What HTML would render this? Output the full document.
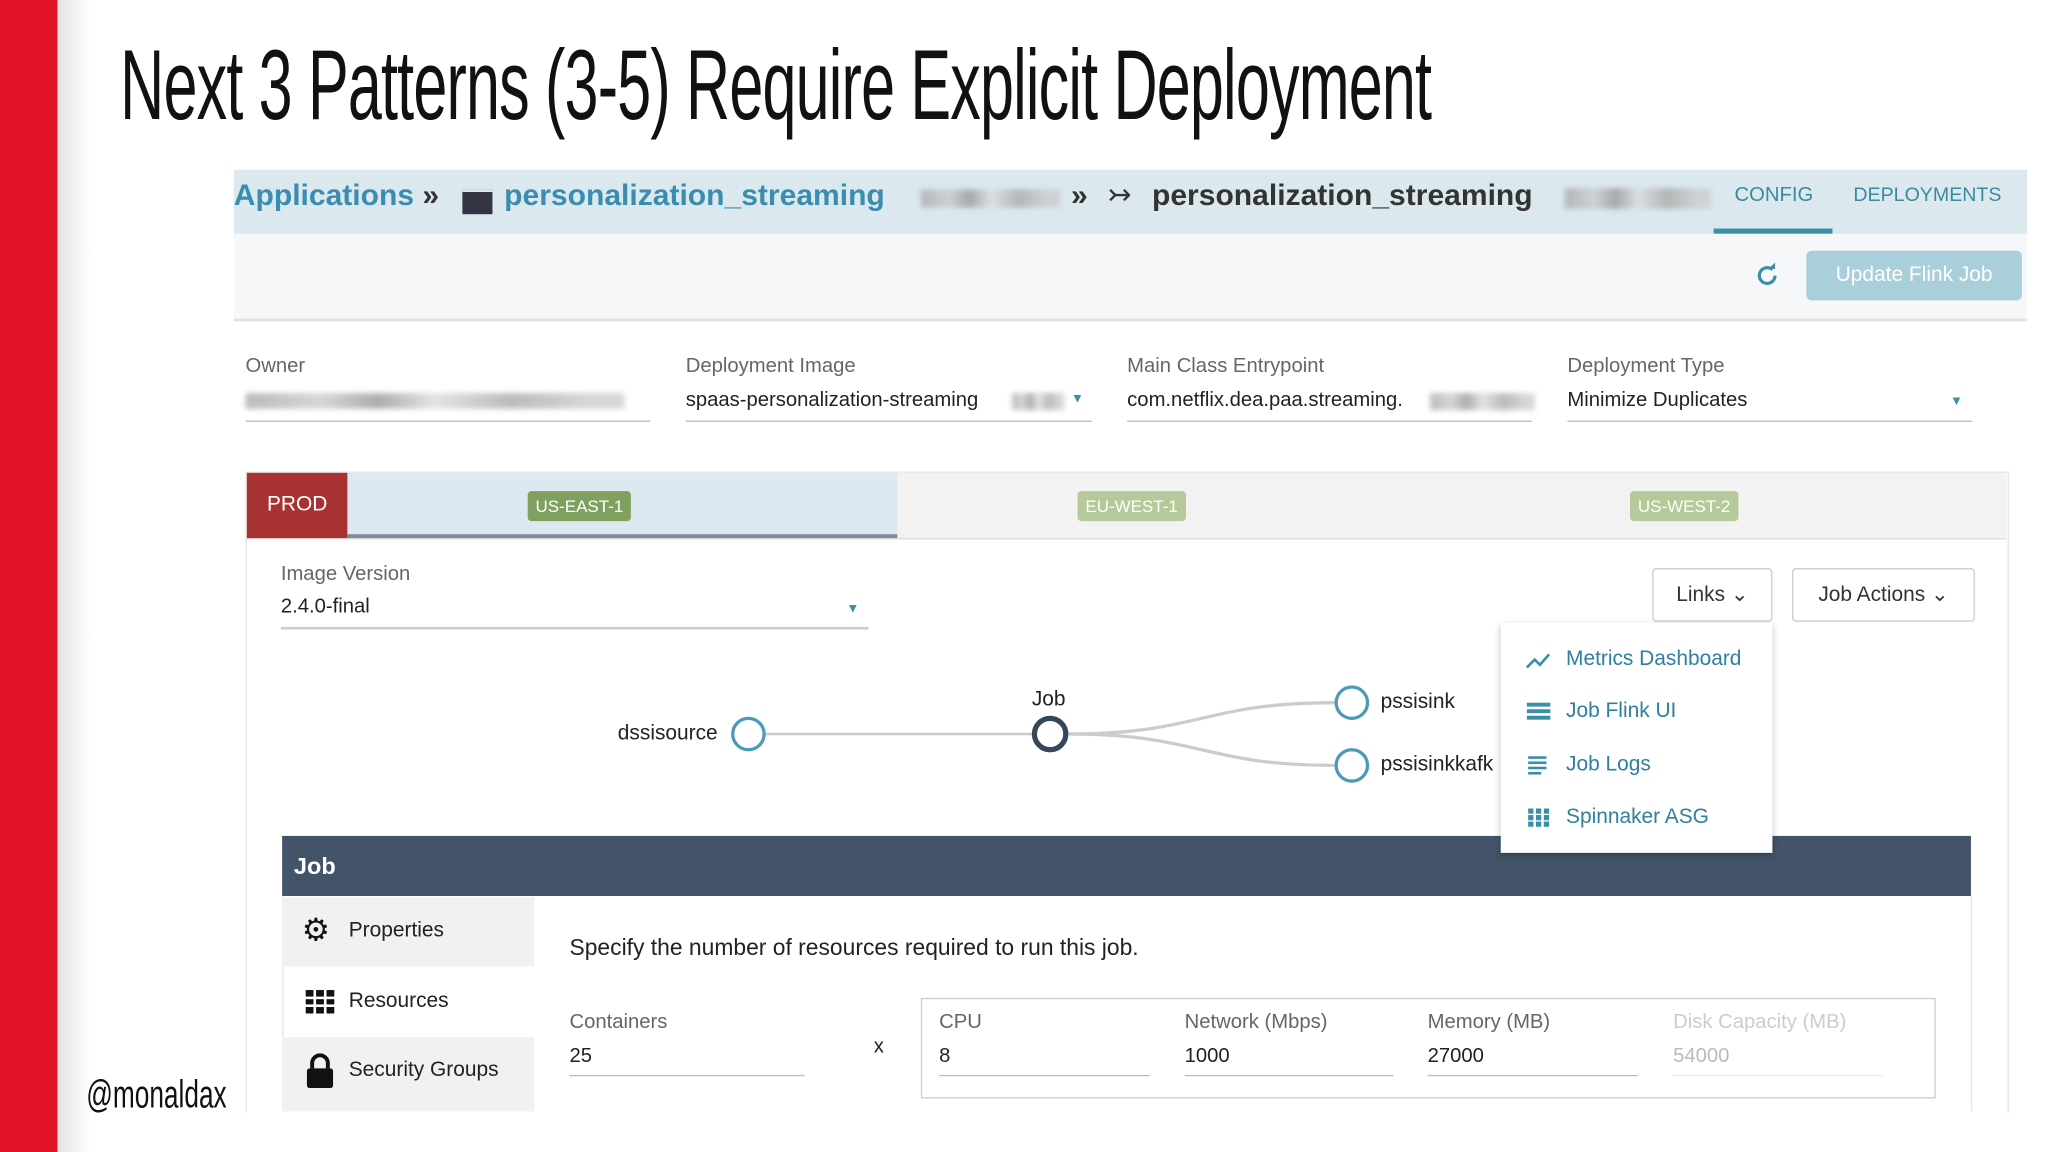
<!DOCTYPE html>
<html><head><meta charset="utf-8"><style>
html,body{margin:0;padding:0;width:2048px;height:1152px;overflow:hidden;background:#fff}
#w{position:absolute;left:0;top:0;width:1568px;height:882px;transform:scale(1.306122);transform-origin:0 0;font-family:"Liberation Sans",sans-serif;color:#333}
.a{position:absolute}
.lbl{font-size:15.5px;color:#666}
.val{font-size:15.5px;color:#222}
.ul{height:1px;background:#bbb}
.blur{background:linear-gradient(90deg,#aaa,#ccc 20%,#999 35%,#ddd 50%,#aaa 70%,#ccc 90%);filter:blur(2px);opacity:.8}
.badge{font-size:13px;color:#fff;padding:4px 6px;border-radius:3px}
.mi{font-size:15.5px;color:#2f7f9e}
.bc{font-size:23px;font-weight:bold;white-space:nowrap}
</style></head><body><div id="w">
<div class="a" style="left:0;top:0;width:44px;height:882px;background:#e21127"></div>
<div class="a" style="left:44px;top:0;width:26px;height:882px;background:linear-gradient(90deg,#e4e4e4,#fff)"></div>
<div class="a" style="left:92px;top:22px;font-family:'Liberation Sans Narrow','Liberation Sans',sans-serif;font-size:76px;color:#111;white-space:nowrap;transform:scaleX(0.615);transform-origin:0 0;letter-spacing:-1px">Next 3 Patterns (3-5) Require Explicit Deployment</div>
<div class="a" style="left:66px;top:822px;font-family:'Liberation Sans Narrow',sans-serif;font-size:30px;color:#111;transform:scaleX(0.67);transform-origin:0 0">@monaldax</div>

<div class="a" style="left:179px;top:130px;width:1373px;height:49px;background:#dbe9ef"></div>
<div class="a bc" style="left:179px;top:136px;color:#3b8db0">Applications <span style="color:#333">»</span></div>
<div class="a" style="left:354px;top:145px;width:23px;height:17px;background:#334;border-top:2px solid #dbe9ef;box-shadow:0 -3px 0 #334 inset"></div>
<div class="a bc" style="left:386px;top:136px;color:#3b8db0">personalization_streaming</div>
<div class="a blur" style="left:705px;top:145px;width:107px;height:14px"></div>
<div class="a bc" style="left:820px;top:136px;color:#333">»</div>
<div class="a" style="left:848px;top:136px;font-size:22px;color:#333">↣</div>
<div class="a bc" style="left:882px;top:136px;color:#333">personalization_streaming</div>
<div class="a blur" style="left:1198px;top:144px;width:112px;height:16px"></div>
<div class="a" style="left:1328px;top:141px;font-size:15.5px;color:#3a8a9f">CONFIG</div>
<div class="a" style="left:1419px;top:141px;font-size:15px;color:#3a8a9f">DEPLOYMENTS</div>
<div class="a" style="left:1312px;top:175px;width:91px;height:4px;background:#3a8fa8"></div>

<div class="a" style="left:179px;top:179px;width:1373px;height:65px;background:#f6f7f9;border-bottom:2px solid #e2e2e2"></div>
<svg class="a" style="left:1343px;top:201px" width="20" height="20" viewBox="0 0 20 20"><path d="M16 10a6 6 0 1 1-2-4.5" fill="none" stroke="#3a8fa8" stroke-width="2.4"/><path d="M11 5h5V0z" fill="#3a8fa8"/></svg>
<div class="a" style="left:1383px;top:192px;width:165px;height:38px;background:#a9d0da;border-radius:4px;color:#fff;font-size:16px;line-height:38px;text-align:center">Update Flink Job</div>

<div class="a lbl" style="left:188px;top:272px">Owner</div>
<div class="a blur" style="left:188px;top:301px;width:290px;height:12px"></div>
<div class="a ul" style="left:188px;top:322px;width:310px"></div>
<div class="a lbl" style="left:525px;top:272px">Deployment Image</div>
<div class="a val" style="left:525px;top:298px">spaas-personalization-streaming</div>
<div class="a blur" style="left:775px;top:301px;width:40px;height:13px"></div>
<div class="a" style="left:820px;top:300px;font-size:10px;color:#3a8fa8">▼</div>
<div class="a ul" style="left:525px;top:322px;width:311px"></div>
<div class="a lbl" style="left:863px;top:272px">Main Class Entrypoint</div>
<div class="a val" style="left:863px;top:298px">com.netflix.dea.paa.streaming.</div>
<div class="a blur" style="left:1095px;top:301px;width:80px;height:13px"></div>
<div class="a ul" style="left:863px;top:322px;width:310px"></div>
<div class="a lbl" style="left:1200px;top:272px">Deployment Type</div>
<div class="a val" style="left:1200px;top:298px">Minimize Duplicates</div>
<div class="a" style="left:1493px;top:302px;font-size:10px;color:#3a8fa8">▼</div>
<div class="a ul" style="left:1200px;top:322px;width:310px"></div>

<div class="a" style="left:188px;top:361px;width:1348px;height:490px;border:1px solid #e4e4e4;border-bottom:none"></div>
<div class="a" style="left:189px;top:362px;width:1347px;height:50px;background:#f2f2f2;border-bottom:1px solid #ddd"></div>
<div class="a" style="left:189px;top:362px;width:77px;height:50px;background:#a83232;color:#fff;font-size:16px;line-height:50px;text-align:center">PROD</div>
<div class="a" style="left:266px;top:362px;width:421px;height:47px;background:#dde9f0;border-bottom:3px solid #7f8c99"></div>
<div class="a badge" style="left:404px;top:376px;background:#80a060">US-EAST-1</div>
<div class="a badge" style="left:825px;top:376px;background:#b5c99a">EU-WEST-1</div>
<div class="a badge" style="left:1248px;top:376px;background:#b5c99a">US-WEST-2</div>

<div class="a lbl" style="left:215px;top:431px">Image Version</div>
<div class="a val" style="left:215px;top:456px">2.4.0-final</div>
<div class="a" style="left:648px;top:461px;font-size:10px;color:#3a8fa8">▼</div>
<div class="a" style="left:215px;top:480px;width:450px;height:2px;background:#ccc"></div>
<div class="a" style="left:1265px;top:435px;width:90px;height:39px;border:1px solid #ccc;border-radius:3px;font-size:16px;line-height:39px;text-align:center">Links ⌄</div>
<div class="a" style="left:1372px;top:435px;width:138px;height:39px;border:1px solid #ccc;border-radius:3px;font-size:16px;line-height:39px;text-align:center">Job Actions ⌄</div>

<svg class="a" style="left:0;top:0" width="1568" height="882">
<line x1="586" y1="562" x2="792" y2="562" stroke="#ccc" stroke-width="2"/>
<path d="M817 562C920 562 920 538 1022 538M817 562C920 562 920 586 1022 586" fill="none" stroke="#ccc" stroke-width="2.5"/>
<circle cx="573" cy="562" r="12" fill="#fff" stroke="#4a9ab8" stroke-width="2.5"/>
<circle cx="804" cy="562" r="12" fill="#fff" stroke="#36475a" stroke-width="4"/>
<circle cx="1035" cy="538" r="12" fill="#fff" stroke="#4a9ab8" stroke-width="2.5"/>
<circle cx="1035" cy="586" r="12" fill="#fff" stroke="#4a9ab8" stroke-width="2.5"/>
</svg>
<div class="a val" style="left:473px;top:553px;font-size:16px">dssisource</div>
<div class="a val" style="left:790px;top:527px;font-size:16px">Job</div>
<div class="a val" style="left:1057px;top:529px;font-size:16px">pssisink</div>
<div class="a val" style="left:1057px;top:577px;font-size:16px">pssisinkkafk</div>

<div class="a" style="left:216px;top:640px;width:1293px;height:46px;background:#43546a;color:#fff;font-size:18px;font-weight:bold;line-height:46px;text-indent:9px">Job</div>
<div class="a" style="left:1149px;top:477px;width:208px;height:176px;background:#fff;box-shadow:0 2px 5px rgba(0,0,0,.25)"></div>
<svg class="a" style="left:1168px;top:496px" width="20" height="140">
<path d="M1 15l6-6 4 4 7-8" fill="none" stroke="#3a8fa8" stroke-width="2"/>
<g fill="#3a8fa8"><rect x="1" y="42" width="18" height="3"/><rect x="1" y="47" width="18" height="3"/><rect x="1" y="52" width="18" height="3"/>
<rect x="2" y="83" width="14" height="2"/><rect x="2" y="87" width="14" height="2"/><rect x="2" y="91" width="14" height="2"/><rect x="2" y="95" width="10" height="2"/>
<rect x="2" y="123" width="4" height="4"/><rect x="8" y="123" width="4" height="4"/><rect x="14" y="123" width="4" height="4"/><rect x="2" y="128" width="4" height="4"/><rect x="8" y="128" width="4" height="4"/><rect x="14" y="128" width="4" height="4"/><rect x="2" y="133" width="4" height="4"/><rect x="8" y="133" width="4" height="4"/><rect x="14" y="133" width="4" height="4"/></g></svg>
<div class="a mi" style="left:1199px;top:496px;font-size:16px">Metrics Dashboard</div>
<div class="a mi" style="left:1199px;top:536px;font-size:16px">Job Flink UI</div>
<div class="a mi" style="left:1199px;top:577px;font-size:16px">Job Logs</div>
<div class="a mi" style="left:1199px;top:617px;font-size:16px">Spinnaker ASG</div>

<div class="a" style="left:216px;top:686px;width:1292px;height:165px;border-left:1px solid #e4e4e4;border-right:1px solid #e4e4e4"></div>
<div class="a" style="left:216px;top:687px;width:193px;height:53px;background:#f1f1f1"></div>
<div class="a" style="left:216px;top:794px;width:193px;height:57px;background:#f1f1f1"></div>
<div class="a" style="left:231px;top:700px;font-size:24px;line-height:26px;color:#111">⚙</div>
<div class="a val" style="left:267px;top:704px;font-size:16px">Properties</div>
<svg class="a" style="left:234px;top:758px" width="22" height="18"><g fill="#111"><rect x="0" y="0" width="6" height="5"/><rect x="8" y="0" width="6" height="5"/><rect x="16" y="0" width="6" height="5"/><rect x="0" y="7" width="6" height="4"/><rect x="8" y="7" width="6" height="4"/><rect x="16" y="7" width="6" height="4"/><rect x="0" y="13" width="6" height="5"/><rect x="8" y="13" width="6" height="5"/><rect x="16" y="13" width="6" height="5"/></g></svg>
<div class="a val" style="left:267px;top:758px;font-size:16px">Resources</div>
<svg class="a" style="left:234px;top:806px" width="22" height="27"><path d="M5 12V8a6 6 0 0 1 12 0v4" fill="none" stroke="#111" stroke-width="3"/><rect x="1" y="12" width="20" height="15" rx="2" fill="#111"/></svg>
<div class="a val" style="left:267px;top:811px;font-size:16px">Security Groups</div>
<div class="a" style="left:436px;top:715px;font-size:17.5px;color:#222">Specify the number of resources required to run this job.</div>
<div class="a lbl" style="left:436px;top:774px">Containers</div>
<div class="a val" style="left:436px;top:800px">25</div>
<div class="a ul" style="left:436px;top:823px;width:180px"></div>
<div class="a val" style="left:669px;top:793px">x</div>
<div class="a" style="left:705px;top:764px;width:775px;height:75px;border:1px solid #ccc"></div>
<div class="a lbl" style="left:719px;top:774px">CPU</div><div class="a val" style="left:719px;top:800px">8</div><div class="a ul" style="left:719px;top:823px;width:161px"></div>
<div class="a lbl" style="left:907px;top:774px">Network (Mbps)</div><div class="a val" style="left:907px;top:800px">1000</div><div class="a ul" style="left:907px;top:823px;width:160px"></div>
<div class="a lbl" style="left:1093px;top:774px">Memory (MB)</div><div class="a val" style="left:1093px;top:800px">27000</div><div class="a ul" style="left:1093px;top:823px;width:161px"></div>
<div class="a lbl" style="left:1281px;top:774px;color:#ccc">Disk Capacity (MB)</div><div class="a val" style="left:1281px;top:800px;color:#bbb">54000</div>
<div class="a" style="left:1281px;top:823px;width:160px;border-top:1px dotted #ddd"></div>
</div></body></html>
